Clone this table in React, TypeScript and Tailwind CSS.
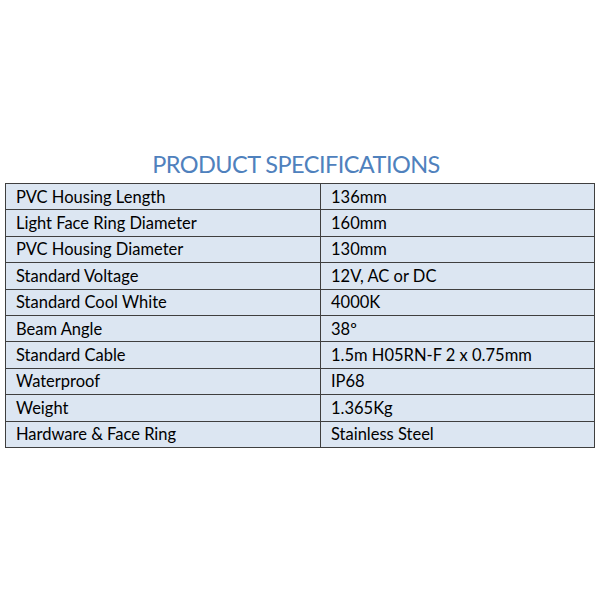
import React from "react";

const rows: [string, string][] = [
  ["PVC Housing Length", "136mm"],
  ["Light Face Ring Diameter", "160mm"],
  ["PVC Housing Diameter", "130mm"],
  ["Standard Voltage", "12V, AC or DC"],
  ["Standard Cool White", "4000K"],
  ["Beam Angle", "38º"],
  ["Standard Cable", "1.5m H05RN-F 2 x 0.75mm"],
  ["Waterproof", "IP68"],
  ["Weight", "1.365Kg"],
  ["Hardware & Face Ring", "Stainless Steel"],
];

export default function App() {
  return (
    <div className="w-[600px] h-[600px] bg-white flex flex-col items-center pt-[147px]" style={{ fontFamily: "Lato, 'Open Sans', sans-serif" }}>
      <div className="text-[23.5px] leading-[34px] text-[#4f81bd] ml-[-8px] tracking-[-0.55px]">PRODUCT SPECIFICATIONS</div>
      <table className="mt-[2px] w-[590px] border-collapse bg-[#dce6f2] text-[16.5px] text-black">
        <tbody>
          {rows.map(([k, v]) => (
            <tr key={k} className="h-[26.4px]">
              <td className="w-[315px] border-[1.5px] border-[#3f3f3f] pl-[10px] py-0 leading-[22px]">{k}</td>
              <td className="border-[1.5px] border-[#3f3f3f] pl-[10px] py-0 leading-[22px]">{v}</td>
            </tr>
          ))}
        </tbody>
      </table>
    </div>
  );
}
